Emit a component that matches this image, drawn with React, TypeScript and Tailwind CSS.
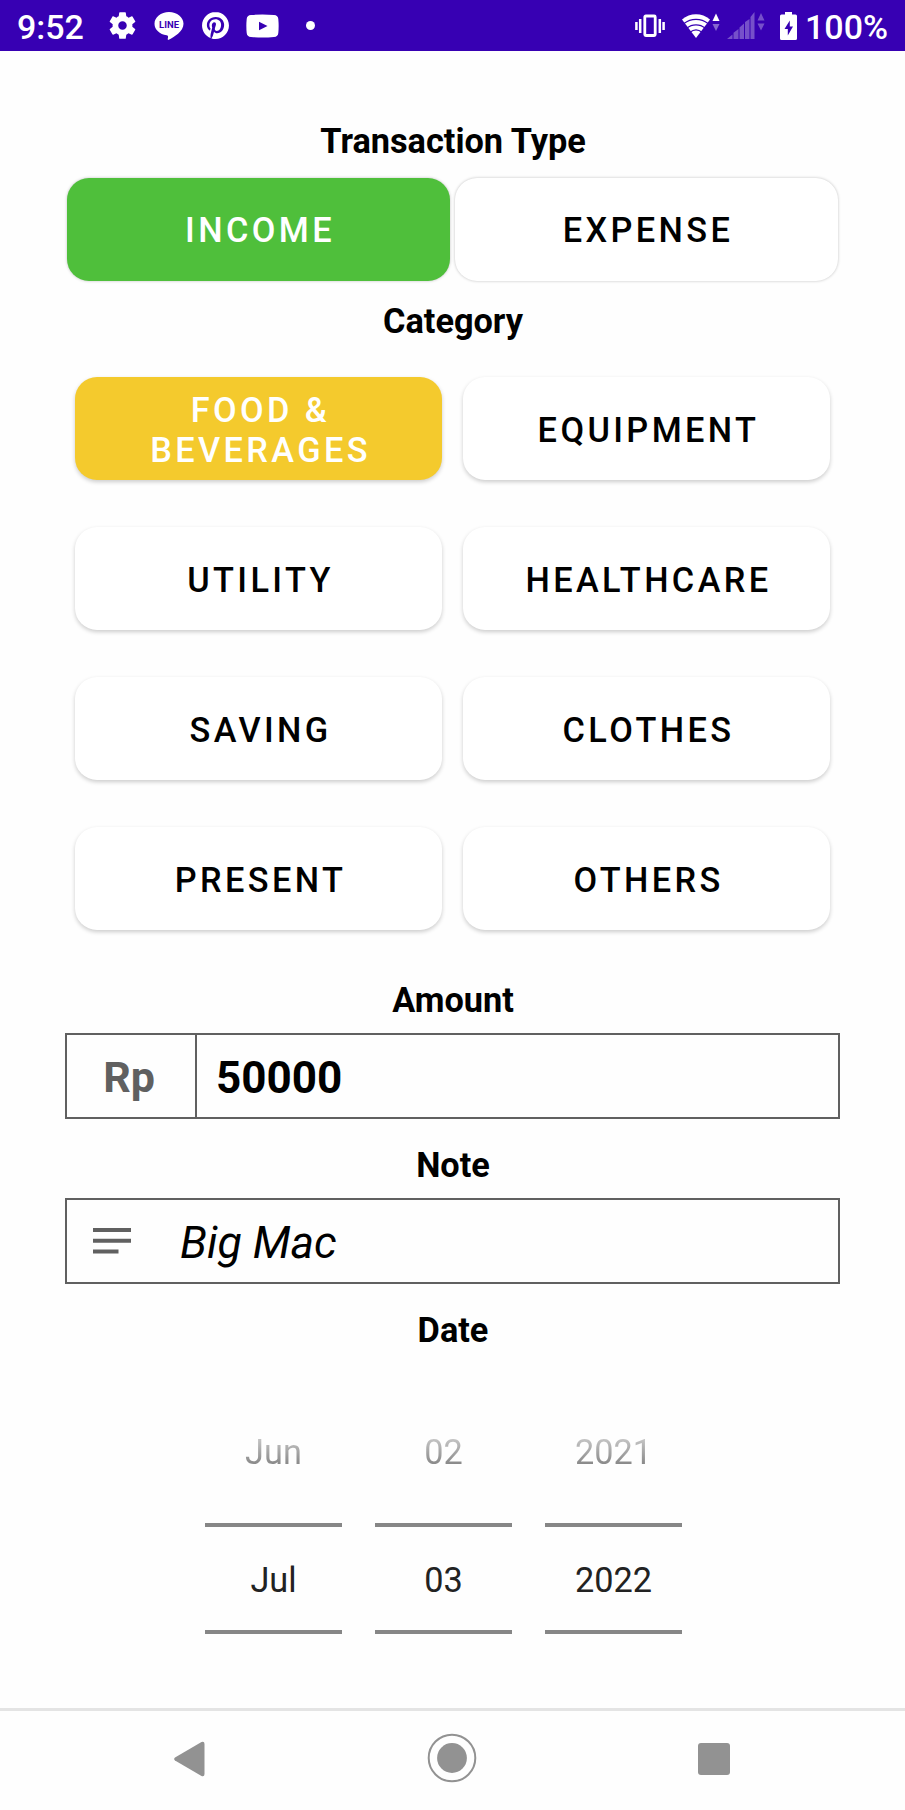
import React from "react";

const Heading = ({ children, className }: { children: string; className: string }) => (
  <h2 className={`pl-px text-center text-[34.3px] font-bold leading-[40px] text-black ${className}`}>{children}</h2>
);

const CATEGORIES = ["Food & Beverages", "Equipment", "Utility", "Healthcare", "Saving", "Clothes", "Present", "Others"];

const PICKERS = [
  { prev: "Jun", current: "Jul" },
  { prev: "02", current: "03" },
  { prev: "2021", current: "2022" },
];

function GearIcon() {
  return (
    <svg className="ml-[22px] h-[33px] w-[33px]" viewBox="0 0 24 24" fill="#fff">
      <path d="M19.14 12.94c.04-.3.06-.61.06-.94 0-.32-.02-.64-.07-.94l2.03-1.58a.49.49 0 0 0 .12-.61l-1.92-3.32a.488.488 0 0 0-.59-.22l-2.39.96c-.5-.38-1.03-.7-1.62-.94l-.36-2.54a.484.484 0 0 0-.48-.41h-3.84c-.24 0-.43.17-.47.41l-.36 2.54c-.59.24-1.13.57-1.62.94l-2.39-.96c-.22-.08-.47 0-.59.22L2.74 8.87c-.12.21-.08.47.12.61l2.03 1.58c-.05.3-.09.63-.09.94s.02.64.07.94l-2.03 1.58a.49.49 0 0 0-.12.61l1.92 3.32c.12.22.37.29.59.22l2.39-.96c.5.38 1.03.7 1.62.94l.36 2.54c.05.24.24.41.48.41h3.84c.24 0 .44-.17.47-.41l.36-2.54c.59-.24 1.13-.56 1.62-.94l2.39.96c.22.08.47 0 .59-.22l1.92-3.32c.12-.22.07-.47-.12-.61l-2.01-1.58zM12 15.100c-1.710 0-3.100-1.390-3.100-3.100s1.390-3.100 3.100-3.100 3.100 1.390 3.100 3.100-1.390 3.100-3.100 3.100z" />
    </svg>
  );
}

function LineIcon() {
  return (
    <svg className="ml-[15px] h-[30px] w-[30px]" viewBox="0 0 30 30">
      <path fill="#fff" d="M15 1C6.900 1 .5 6.200 .5 12.700c0 5.900 5.200 10.600 12.200 11.500 1.200.3 1.500.8 1.300 2.200l-.3 1.700c-.1.700.3 1 .9.700C20 26 29.500 20.500 29.500 12.700 29.500 6.200 23.100 1 15 1z" />
      <text x="15" y="16.600" textAnchor="middle" fontFamily="Roboto, sans-serif" fontWeight="700" fontSize="9.800" textLength="20" lengthAdjust="spacingAndGlyphs" fill="#3700b3">LINE</text>
    </svg>
  );
}

function PinterestIcon() {
  return (
    <svg className="ml-[18px] h-[27px] w-[27px]" viewBox="0 0 24 24" fill="#fff">
      <path d="M12.017 0C5.396 0 .029 5.367.029 11.987c0 5.079 3.158 9.417 7.618 11.162-.105-.949-.199-2.403.041-3.439.219-.937 1.406-5.957 1.406-5.957s-.359-.72-.359-1.781c0-1.663.967-2.911 2.168-2.911 1.024 0 1.518.769 1.518 1.688 0 1.029-.653 2.567-.992 3.992-.285 1.193.6 2.165 1.775 2.165 2.128 0 3.768-2.245 3.768-5.487 0-2.861-2.063-4.869-5.008-4.869-3.410 0-5.409 2.562-5.409 5.199 0 1.033.394 2.143.889 2.741.099.12.112.225.085.345-.09.375-.293 1.199-.334 1.363-.053.225-.172.271-.401.165-1.495-.69-2.433-2.878-2.433-4.646 0-3.776 2.748-7.252 7.920-7.252 4.158 0 7.392 2.967 7.392 6.923 0 4.135-2.607 7.462-6.233 7.462-1.214 0-2.354-.629-2.758-1.379l-.749 2.848c-.269 1.045-1.004 2.352-1.498 3.146 1.123.345 2.306.535 3.550.535 6.607 0 11.985-5.365 11.985-11.987C23.970 5.390 18.592.026 11.985.026L12.017 0z" />
    </svg>
  );
}

function YoutubeIcon() {
  return (
    <svg className="ml-[17px] h-[24px] w-[33px]" viewBox="0 0 33 24">
      <path fill="#fff" fillRule="evenodd" d="M5 1Q16.500 0 28 1Q32 1.300 32.300 5Q33 12 32.300 19Q32 22.700 28 23Q16.500 24 5 23Q1 22.700.7 19Q0 12 .7 5Q1 1.300 5 1zM13 7.700V16.300L21.500 12z" />
    </svg>
  );
}

function VibrateIcon() {
  return (
    <svg className="h-[24px] w-[30px]" viewBox="0 0 30 24" fill="none" stroke="#fff">
      <rect x="9.800" y="2" width="10.400" height="19.500" rx="1" strokeWidth="2.800" />
      <path d="M1.400 8v8M5.200 5v14M24.800 5v14M28.600 8v8" strokeWidth="2.500" />
    </svg>
  );
}

function WifiIcon() {
  return (
    <svg className="ml-[17px] h-[26px] w-[38px]" viewBox="0 0 38 26">
      <path d="M0 6.500C8 -0.500 20 -0.500 28 6.500L14 25z" fill="#fff" />
      <path d="M2 10.500C9 5 19 5 26 10.500M5 15C10 10.700 18 10.700 23 15M8 19.300C12 16 16 16 20 19.300" fill="none" stroke="#3700b3" strokeWidth="1.200" />
      <path d="M30.500 8h7L34 .5z" fill="#fff" />
      <path d="M30.500 11h7L34 18z" fill="#8767d0" />
    </svg>
  );
}

function SignalIcon() {
  return (
    <svg className="ml-[7px] h-[27px] w-[38px]" viewBox="0 0 38 27" fill="#7650ca">
      <path d="M0 27L5.500 22.500V27zM6.500 27V20.800L11.500 17V27zM12.500 27V15.500L17 11.500V27zM18 27V10L22.500 7V27zM23.500 27V5L27.500 0V27z" />
      <path d="M30.500 8.500h7L34 1zM30.500 11.500h7L34 18.500z" />
    </svg>
  );
}

function BatteryIcon() {
  return (
    <svg className="ml-[15px] h-[28px] w-[17px]" viewBox="0 0 17 28">
      <path fill="#fff" fillRule="evenodd" d="M5 0h7v2.500h3.500q1.500 0 1.500 1.500v22.500q0 1.500-1.500 1.500h-14Q0 28 0 26.500V4q0-1.500 1.500-1.500H5zM9.800 8.500L4.500 17H7.800V23.500L13 14.500H9.800z" />
    </svg>
  );
}

export default function App() {
  return (
    <div className="flex h-[1810px] w-[905px] flex-col overflow-hidden bg-[#fefefe] font-['Roboto',sans-serif]">
      <header className="flex h-[51px] shrink-0 items-center bg-[#3700b3] pl-[17px] pr-[17px] text-[34px] font-medium leading-[51px] text-white">
        <span className="w-[67px] pt-[3px]">9:52</span>
        <GearIcon />
        <LineIcon />
        <PinterestIcon />
        <YoutubeIcon />
        <span className="ml-[27px] h-[9px] w-[9px] rounded-full bg-white" />
        <div className="ml-auto flex items-center">
          <VibrateIcon />
          <WifiIcon />
          <SignalIcon />
          <BatteryIcon />
          <span className="ml-[8px] w-[83px] pt-[3px]">100%</span>
        </div>
      </header>

      <main className="flex h-[1657px] flex-col">
        <Heading className="mt-[70px]">Transaction Type</Heading>
        <div className="mt-[17px] flex justify-between pl-[67px] pr-[67px]">
          <button className="h-[103px] w-[383px] rounded-[22px] bg-[#4fbf3b] pl-[3px] text-[34.3px] font-medium uppercase leading-[40px] tracking-[3.4px] text-white shadow-[0_0_3px_rgba(0,0,0,0.25)]">Income</button>
          <button className="h-[103px] w-[383px] rounded-[22px] bg-white pl-[3px] text-[34.3px] font-medium uppercase leading-[40px] tracking-[3.4px] text-black shadow-[0_0_3px_rgba(0,0,0,0.25)]">Expense</button>
        </div>

        <Heading className="mt-[20px]">Category</Heading>
        <div className="mt-[36px] grid grid-cols-[367px_367px] gap-x-[21px] gap-y-[47px] pl-[75px]">
          {CATEGORIES.map((name, i) => (
            <button
              key={name}
              className={`h-[103px] rounded-[22px] pl-[50px] pr-[46px] pt-[2px] text-[34.3px] font-medium uppercase leading-[40px] tracking-[3.4px] shadow-[0_2px_4px_rgba(0,0,0,0.2)] ${i === 0 ? "bg-[#f4ca2d] text-white" : "bg-white text-black"}`}
            >
              {name}
            </button>
          ))}
        </div>

        <Heading className="mt-[50px]">Amount</Heading>
        <div className="ml-[65px] mt-[13px] flex h-[86px] w-[775px] items-center border-2 border-[#606060]">
          <span className="flex h-full w-[130px] items-center justify-center border-r-2 border-[#606060] pr-[4px] pt-[3px] text-[43px] font-bold text-[#606060]">Rp</span>
          <span className="pl-[19px] pt-[4px] text-[44px] font-bold text-black">50000</span>
        </div>

        <Heading className="mt-[26px]">Note</Heading>
        <div className="ml-[65px] mt-[13px] flex h-[86px] w-[775px] items-center border-2 border-[#606060]">
          <svg className="ml-[26px] h-[26px] w-[38px]" viewBox="0 0 38 26" fill="#606060">
            <path d="M0 0h38v4H0zM0 10.700h38v4H0zM0 21.400h25.500v4H0z" />
          </svg>
          <span className="ml-[49px] pt-[4px] text-[44.6px] italic text-black">Big Mac</span>
        </div>

        <Heading className="mt-[26px]">Date</Heading>
        <div className="ml-[205px] mt-[82px] flex gap-[33px] text-center text-[34.3px] leading-[40px]">
          {PICKERS.map(({ prev, current }) => (
            <div key={current} className="w-[137px]">
              <div className="bg-linear-to-b from-[#c2c2c2] from-20% to-[#858585] to-85% bg-clip-text text-transparent">{prev}</div>
              <div className="mt-[51px] flex h-[111px] flex-col justify-center border-y-4 border-[#868686] pt-[2px] text-[#222]">{current}</div>
            </div>
          ))}
        </div>
      </main>

      <nav className="h-[102px] w-full shrink-0 border-t-[3px] border-[#e4e4e4] bg-[#fefefe]">
        <div className="flex items-center pt-[22px]">
          <svg className="ml-[174px] h-[50px] w-[31px]" viewBox="0 0 31 50" fill="#929292">
            <path d="M1 24.500L27.500 9Q30.500 8 30.500 11V41Q30.500 44 27.500 43L1 27.500Q-.7 26 1 24.500z" />
          </svg>
          <svg className="ml-[222px] h-[50px] w-[50px]" viewBox="0 0 50 50">
            <circle cx="25" cy="25" r="23.300" fill="none" stroke="#929292" strokeWidth="2" />
            <circle cx="25" cy="25" r="14.900" fill="#929292" />
          </svg>
          <span className="ml-[221px] mt-[2px] h-[32px] w-[32px] rounded-[3px] bg-[#929292]" />
        </div>
      </nav>
    </div>
  );
}
